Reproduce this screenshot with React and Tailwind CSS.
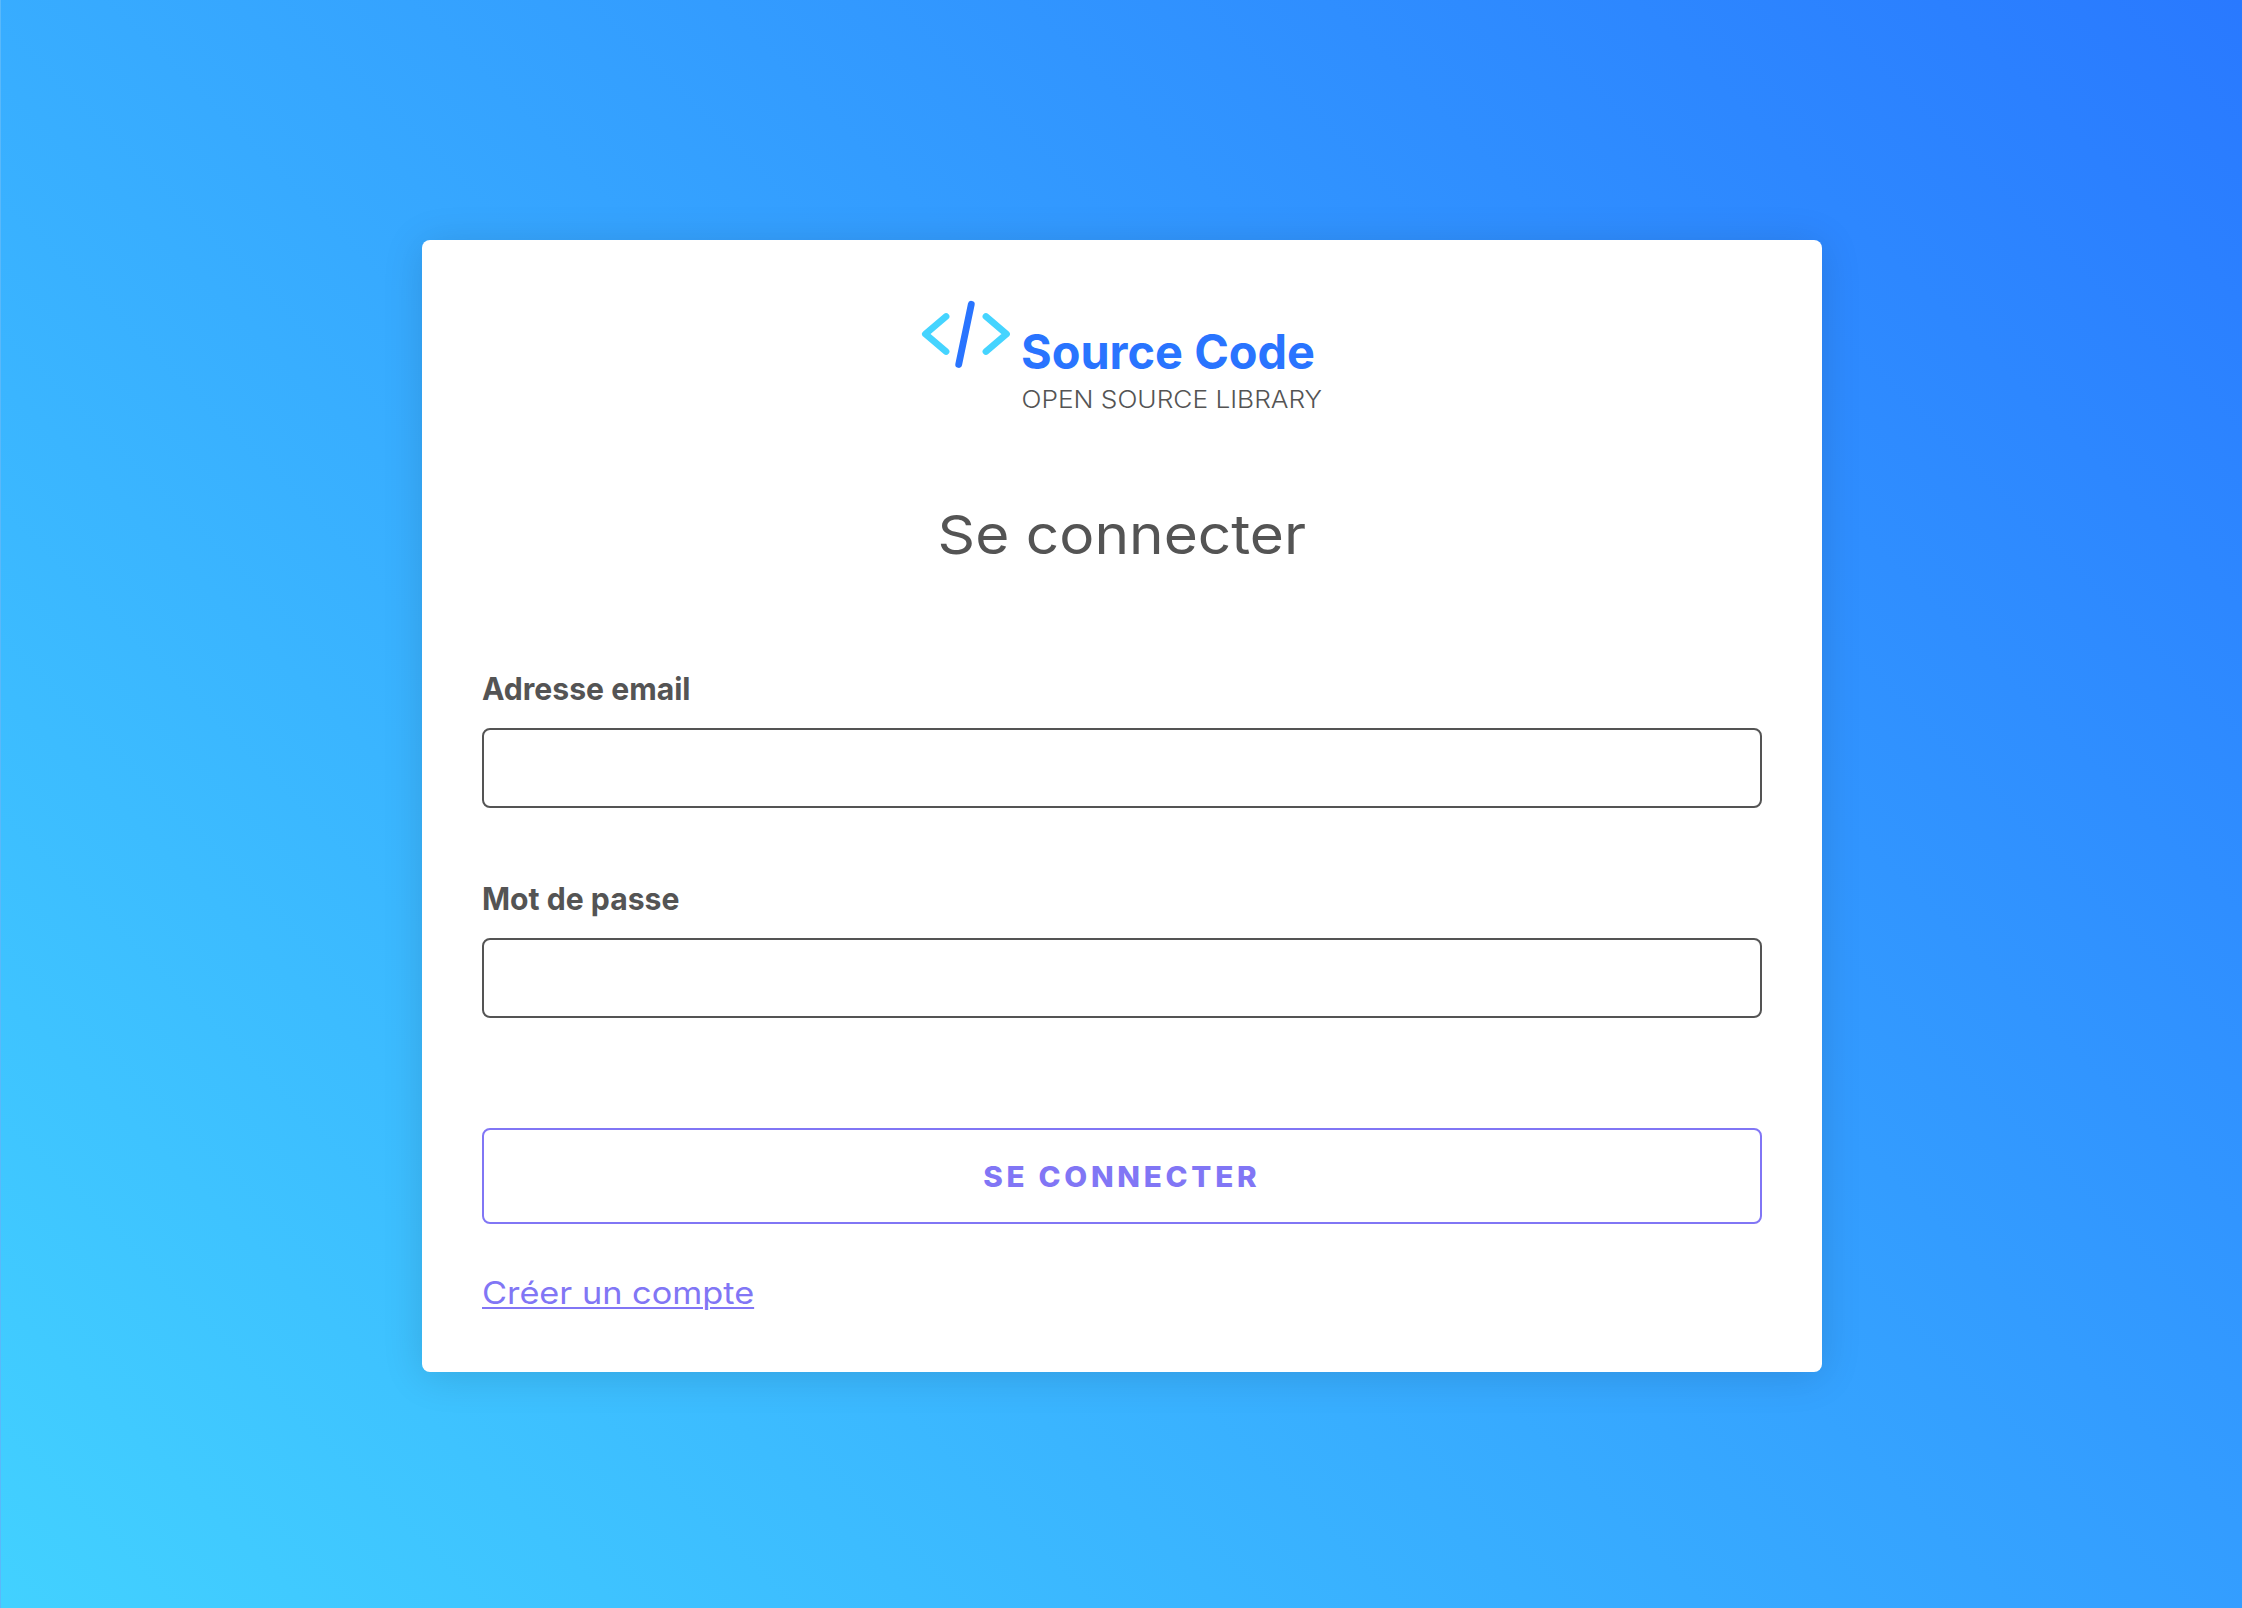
function Logo() {
  return (
    <svg
      viewBox="0 0 402 118"
      className="block h-[118px] w-[402px] shrink-0 overflow-visible"
      role="img"
      aria-label="Source Code, open source library"
    >
      <g fill="none" strokeLinecap="round" strokeLinejoin="round">
        <path d="M25 16.5 L4.4 34 L25 51.5" stroke="#45d4ff" strokeWidth="6.8" />
        <path d="M65 16.5 L85.5 34 L65 51.5" stroke="#45d4ff" strokeWidth="6.8" />
        <path d="M50.3 4.3 L37.7 64.5" stroke="#2974ff" strokeWidth="6.8" />
      </g>
      <text
        x="100"
        y="68.5"
        textLength="294"
        lengthAdjust="spacingAndGlyphs"
        className="fill-[#2974ff] font-['Inter',sans-serif] text-[48px] font-bold"
      >
        Source Code
      </text>
      <text
        x="100.5"
        y="107.5"
        textLength="300.5"
        lengthAdjust="spacingAndGlyphs"
        className="fill-[#545454] font-['Inter',sans-serif] text-[23.5px] font-light"
      >
        OPEN SOURCE LIBRARY
      </text>
    </svg>
  );
}

function Field({ id, label, type, className }) {
  return (
    <div className={className}>
      <label
        htmlFor={id}
        className="block h-10 w-fit origin-left scale-x-[0.957] text-[31.5px] leading-10 font-bold text-[#545454]"
      >
        {label}
      </label>
      <input
        id={id}
        type={type}
        className="mt-[19px] block h-20 w-full rounded-lg border-2 border-[#545454] bg-white px-5 text-[32px] outline-none"
      />
    </div>
  );
}

export default function App() {
  return (
    <main className="flex h-[1608px] w-[2242px] flex-col items-center border-l border-[#5ab8fa] bg-[linear-gradient(45deg,#42d1ff,#2979ff)] pt-60 pl-px font-['Inter',sans-serif]">
      <form
        className="flex h-[1132px] w-[1400px] flex-col items-center rounded-lg bg-white px-[60px] pt-[60px] shadow-[0_4px_40px_rgba(0,0,0,0.13)]"
        onSubmit={(e) => e.preventDefault()}
      >
        <Logo />
        <h1 className="mt-[81px] h-[72px] scale-x-[1.085] text-[54px] leading-[72px] whitespace-nowrap text-[#545454]">
          Se connecter
        </h1>
        <Field id="email" label="Adresse email" type="email" className="mt-[98px] w-full" />
        <Field id="password" label="Mot de passe" type="password" className="mt-[71px] w-full" />
        <button
          type="submit"
          className="mt-[110px] h-24 w-full rounded-lg border-2 border-[#8176f5] pt-0.5 text-[28px] font-extrabold text-[#8176f5]"
        >
          <span className="inline-block scale-x-[1.06] tracking-[3.5px]">SE CONNECTER</span>
        </button>
        <a
          href="#"
          className="mt-[49px] block h-10 w-fit origin-left scale-x-[1.106] self-start text-[31px] leading-10 text-[#8176f5] underline decoration-2 underline-offset-[3px]"
        >
          Créer un compte
        </a>
      </form>
    </main>
  );
}
